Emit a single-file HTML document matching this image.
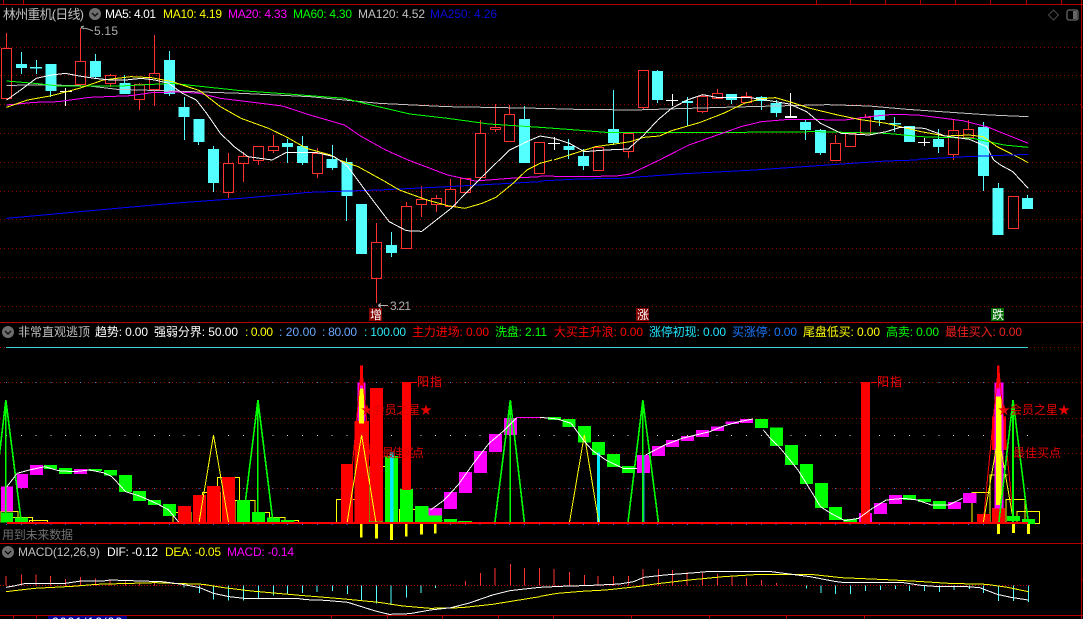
<!DOCTYPE html>
<html><head><meta charset="utf-8"><title>林州重机</title>
<style>
html,body{margin:0;padding:0;background:#000;width:1083px;height:619px;overflow:hidden}
svg{display:block;position:absolute;left:0;top:0;font-family:"Liberation Sans","Noto Sans CJK SC",sans-serif;shape-rendering:crispEdges}
.l{fill:none;vector-effect:non-scaling-stroke;stroke-width:1}
.t{fill:none;vector-effect:non-scaling-stroke;stroke-width:1.6}
.y{fill:none;vector-effect:non-scaling-stroke;stroke-width:1;stroke:#ff0}
.g{stroke:#00ff00}.w{stroke:#fff}.ye{stroke:#ff0}.m{stroke:#f0f}.gr{stroke:#c0c0c0}.b{stroke:#0000ff}
text{font-size:12px}
</style></head>
<body>
<svg width="1083" height="619" viewBox="0 0 1083 619">
<rect width="1083" height="619" fill="#000"/>

<!-- frame -->
<g stroke="#b40000" stroke-width="1" fill="none">
<path d="M0 4.5H1083M0 322.5H1083M0 543.5H1083M0 615.5H1083M1081.5 0V619"/>
<path d="M3.5 0V4M23.5 0V4M816.5 0V4M850.5 0V4M885.5 0V4M920.5 0V4M955.5 0V4M990.5 0V4M1026.5 0V4M1061.5 0V4"/>
<path d="M13.5 615V619M36.5 615V619M331.5 615V619M387.5 615V619M442.5 615V619M498.5 615V619M553.5 615V619M631.5 615V619M709.5 615V619M786.5 615V619M864.5 615V619"/>
<path d="M1081 107H1083M1081 212H1083M1081 322H1083M1081 436H1083M1081 580H1083"/>
</g>

<!-- main grid -->
<g stroke="#980000" stroke-width="1" stroke-dasharray="1 3" fill="none">
<path d="M0 47.5H1081M0 75.5H1081M0 104.5H1081M0 133.5H1081M0 162.5H1081M0 191.5H1081M0 219.5H1081M0 248.5H1081M0 277.5H1081M0 306.5H1081"/>
<path d="M0 382.5H1081M0 418.5H1081M0 453.5H1081M0 488.5H1081M0 347.5H6M1030 347.5H1081"/>
</g>
<path d="M0 585.5H1030" stroke="#c00000" stroke-width="1" stroke-dasharray="1 2" fill="none"/>
<path d="M6 347.5H1028" stroke="#3fd0d0" stroke-width="1"/>
<path d="M6 382.5H1028" stroke="#5a8ad0" stroke-width="1" stroke-dasharray="1 13.8" fill="none"/>
<path d="M6 488.5H1028" stroke="#4a80e0" stroke-width="1" stroke-dasharray="1 13.8" fill="none"/>
<path d="M6 435.5H1028" stroke="#e0e0e0" stroke-width="1" stroke-dasharray="1 13.8" fill="none"/>
<path d="M6 524.5H1028" stroke="#3060ff" stroke-width="1" stroke-dasharray="1 13.8" fill="none"/>

<!-- candles: cyan -->
<g fill="#54ffff">
<rect x="16" y="64" width="11" height="4"/><rect x="30" y="67" width="12" height="1.5"/><rect x="45.4" y="64" width="11" height="27"/>
<rect x="90" y="61" width="11" height="16"/><rect x="119.4" y="83" width="11" height="11"/><rect x="164" y="60" width="11" height="34"/>
<rect x="178.6" y="107" width="11" height="10"/><rect x="193.4" y="119" width="11" height="23"/><rect x="208" y="149" width="11" height="34"/>
<rect x="282" y="143" width="11" height="4"/><rect x="297" y="146" width="11" height="17"/><rect x="326.6" y="159" width="11" height="9"/>
<rect x="341.4" y="162" width="11" height="34"/><rect x="356" y="204" width="11" height="50"/><rect x="386" y="245" width="11" height="8"/>
<rect x="519" y="119" width="11" height="44"/><rect x="563.4" y="146" width="11" height="4"/><rect x="578" y="156" width="11" height="10"/>
<rect x="608" y="129" width="11" height="14"/><rect x="652" y="71" width="11" height="29"/><rect x="682" y="101" width="11" height="2"/>
<rect x="726" y="94" width="11" height="6"/><rect x="756" y="97" width="11" height="4"/><rect x="770.6" y="103" width="11" height="10"/>
<rect x="800" y="122" width="11" height="8"/><rect x="815" y="130" width="11" height="23"/><rect x="874" y="110" width="11" height="10"/>
<rect x="889" y="123" width="12" height="1.5"/><rect x="904" y="126" width="11" height="16"/><rect x="933" y="139" width="11" height="8"/>
<rect x="978" y="127" width="11" height="49"/><rect x="992.6" y="188" width="11" height="47"/><rect x="1022" y="198" width="11" height="11"/>
</g>
<path stroke="#54ffff" stroke-width="1" fill="none" d="M21.5 52V74M36.5 60V74M50.5 64V97M95.5 54V78M124.5 75V94M169.5 51V96M184.5 97V140M198.5 119V145M213.5 146V192M287.5 139V163M302.5 136V165M332.5 145V170M346.5 158V221M391.5 232V257M524.5 106V163M568.5 139V159M583.5 149V170M613.5 90V145M657.5 70V103M687.5 97V126M731.5 94V104M761.5 96V110M776.5 100V117M805.5 119V140M820.5 129V155M879.5 110V126M894.5 117V132M938.5 129V153M983.5 122V191M998.5 183V235M1027.5 195V209"/>
<!-- candles: white -->
<path stroke="#fff" stroke-width="1" fill="none" d="M60 91.5H72M65.5 88V106M548 143.5H560M554.5 137V150M666 100.5H678M672.5 94V106M785 117.5H797M790.5 93V117M918 142.5H930M924.5 138V146"/>
<path stroke="#fff" stroke-width="2" fill="none" d="M785 117H797"/>
<!-- candles: red -->
<g fill="none" stroke="#ff3232" stroke-width="1">
<rect x="1.5" y="48.5" width="10" height="50"/><rect x="75.5" y="61.5" width="10" height="23"/><rect x="105.5" y="75.5" width="10" height="8"/>
<rect x="134.5" y="84.5" width="10" height="15"/><rect x="149.5" y="73.5" width="10" height="16"/><rect x="223.5" y="163.5" width="10" height="29"/>
<rect x="238.5" y="156.5" width="10" height="7"/><rect x="253.5" y="146.5" width="10" height="14"/><rect x="268.5" y="146.5" width="10" height="4"/>
<rect x="312.5" y="153.5" width="10" height="20"/><rect x="371.5" y="242.5" width="10" height="36"/><rect x="401.5" y="206.5" width="10" height="42"/>
<rect x="416.5" y="199.5" width="10" height="5"/><rect x="431.5" y="198.5" width="10" height="6"/><rect x="445.5" y="189.5" width="10" height="17"/>
<rect x="460.5" y="178.5" width="10" height="14"/><rect x="475.5" y="133.5" width="10" height="44"/><rect x="490.5" y="127.5" width="10" height="2"/>
<rect x="504.5" y="114.5" width="10" height="27"/><rect x="534.5" y="142.5" width="10" height="31"/><rect x="593.5" y="147.5" width="10" height="23"/>
<rect x="623.5" y="133.5" width="10" height="18"/><rect x="638.5" y="70.5" width="10" height="37"/><rect x="697.5" y="96.5" width="10" height="15"/>
<rect x="712.5" y="93.5" width="10" height="5"/><rect x="741.5" y="96.5" width="10" height="6"/><rect x="830.5" y="143.5" width="10" height="17"/>
<rect x="845.5" y="133.5" width="10" height="13"/><rect x="860.5" y="117.5" width="10" height="16"/><rect x="948.5" y="130.5" width="10" height="24"/>
<rect x="963.5" y="129.5" width="10" height="8"/><rect x="1008.5" y="196.5" width="10" height="32"/>
<path d="M6.5 33V48M80.5 28V61M80.5 84V87M110.5 74V75M110.5 83V87M139.5 83V84M139.5 99V110M154.5 35V73M154.5 89V106M228.5 153V163M228.5 192V198M243.5 152V156M243.5 163V182M258.5 160V165M273.5 135V146M273.5 150V153M317.5 148V153M317.5 173V178M376.5 223V242M376.5 278V303M406.5 202V206M421.5 186V199M421.5 204V217M436.5 195V198M436.5 204V212M450.5 179V189M480.5 120V133M495.5 104V127M495.5 129V132M509.5 105V114M509.5 141V142M628.5 151V158M643.5 107V109M702.5 94V96M702.5 111V113M717.5 89V93M717.5 98V99M746.5 92V96M835.5 135V143M865.5 114V117M953.5 120V130M953.5 154V160M968.5 120V129"/>
</g>

<!-- MAs left top -->
<g transform="scale(.34436 .33333)">
<polyline class="l gr" points="19,256 150,255 260,258 340,268 500,273 700,280 900,290 1100,310 1300,320 1568,325"/>
<polyline class="l g" points="19,243 100,250 170,258 260,258 350,258 500,250 700,272 850,283 1000,295 1090,318 1190,342 1300,355 1420,372 1568,382"/>
<polyline class="l m" points="19,315 100,307 170,305 260,292 380,287 440,278 520,276 580,280 640,295 720,305 820,318 900,345 1000,375 1050,410 1120,450 1185,480"/>
<polyline class="l ye" points="19,322 80,300 150,287 230,265 300,240 380,230 440,233 500,245 580,272 640,320 700,355 780,385 830,410 890,445 960,465 985,480"/>
<polyline class="l w" points="19,300 60,270 105,235 150,225 190,220 230,228 275,235 320,240 365,240 410,235 450,240 490,250 530,280 570,300 600,340 640,400 680,440 720,470 790,480 830,458 920,458 970,470 985,480"/>
<polyline class="l w" points="1450,480 1480,450 1530,425 1568,408"/>
</g>
<g transform="translate(0 160) scale(.34436 .33333)">
<polyline class="l b" points="19,175 200,158 500,130 700,115 900,97 1100,90 1300,80 1568,65"/>
<polyline class="l m" points="1185,0 1300,45 1380,63 1480,55 1568,50"/>
<polyline class="l ye" points="985,0 1040,20 1110,60 1160,90 1240,120 1300,137 1350,145 1400,130 1440,112 1490,70 1530,30 1568,10"/>
<polyline class="l w" points="985,0 1010,20 1060,90 1130,185 1180,212 1225,214 1310,145 1400,50 1450,0"/>
</g>
<g transform="translate(540 0) scale(.3463 .33333)">
<polyline class="l gr" points="0,325 105,328 270,330 530,322 830,314 950,318 1060,328 1300,345 1410,350"/>
<polyline class="l g" points="0,382 80,388 190,397 570,397 800,395 1000,400 1100,410 1250,415 1340,435 1410,442"/>
<polyline class="l m" points="345,480 430,435 520,402 580,380 640,365 720,358 880,360 950,350 1020,343 1090,345 1220,362 1290,380 1350,405 1410,430"/>
<polyline class="l ye" points="40,480 100,460 160,440 230,430 260,425 300,412 345,408 380,392 460,368 530,340 590,310 640,296 680,293 720,305 780,325 860,345 920,358 1000,370 1060,385 1100,395 1170,408 1240,405 1280,410 1320,440 1400,482"/>
<polyline class="l w" points="0,408 40,415 85,430 128,455 190,450 255,447 300,405 340,360 380,325 425,300 470,284 510,292 600,292 640,298 680,305 720,312 770,335 810,370 870,400 950,405 1000,395 1040,382 1110,385 1170,408 1240,418 1290,440 1310,480"/>
<polyline class="l b" points="1090,478 1230,470 1410,463"/>
</g>
<g transform="translate(540 160) scale(.3463 .33333)">
<polyline class="l b" points="0,63 110,57 230,55 400,42 620,30 830,15 1000,3 1090,0"/>
<polyline class="l m" points="0,48 105,50 220,48 260,42 345,0"/>
<polyline class="l ye" points="0,10 35,0"/>
<polyline class="l ye" points="1395,0 1410,8"/>
<polyline class="l w" points="1310,0 1330,15 1365,35 1410,85"/>
</g>

<!-- panel 2 : bars -->
<g transform="translate(0 430) scale(.34436 .33333)">
<path class="y" d="M3 278V244H52V278M20 278V262H95V278M85 278V271H138V278M503 278V247H555V278M588 278V187H640V278M631 278V142H696V278M683 278V211H740V278M740 278V247H783V278M783 278V262H827V278M827 278V271H867V278M977 278V208H1033V278M1075 278V110H1118M1160 278V238H1205M1245 278V272H1285"/>
<g fill="#f0f">
<rect x="3" y="170" width="35" height="75"/><rect x="50" y="132" width="32" height="42"/><rect x="87" y="105" width="38" height="30"/><rect x="215" y="117" width="38" height="15"/>
<rect x="1245" y="234" width="38" height="22"/><rect x="1289" y="186" width="38" height="51"/><rect x="1333" y="126" width="38" height="63"/><rect x="1376" y="63" width="38" height="66"/><rect x="1420" y="12" width="38" height="54"/><rect x="1463" y="-36" width="38" height="51"/>
</g>
<g fill="#00ff00">
<rect x="3" y="248" width="35" height="30"/><rect x="44" y="263" width="38" height="15"/><rect x="128" y="105" width="38" height="12"/><rect x="171" y="114" width="38" height="18"/><rect x="258" y="117" width="38" height="6"/><rect x="302" y="120" width="38" height="17"/><rect x="346" y="135" width="37" height="51"/><rect x="386" y="183" width="38" height="30"/><rect x="430" y="210" width="37" height="15"/><rect x="473" y="222" width="38" height="36"/>
<rect x="688" y="210" width="38" height="68"/><rect x="732" y="246" width="37" height="32"/><rect x="775" y="262" width="38" height="16"/><rect x="816" y="270" width="39" height="8"/>
<rect x="1118" y="78" width="38" height="200"/><rect x="1161" y="177" width="38" height="101"/><rect x="1205" y="228" width="39" height="50"/><rect x="1245" y="256" width="38" height="22"/><rect x="1289" y="267" width="38" height="11"/><rect x="1330" y="273" width="40" height="5"/>
<rect x="1072" y="270" width="40" height="12"/>
</g>
<g fill="#f00">
<rect x="517" y="228" width="38" height="50"/><rect x="560" y="195" width="38" height="83"/><rect x="601" y="168" width="39" height="110"/><rect x="645" y="141" width="37" height="137"/>
<rect x="990" y="102" width="35" height="176"/><rect x="1030" y="-27" width="42" height="305"/><rect x="1074" y="-126" width="38" height="400"/><rect x="1167" y="-144" width="26" height="324"/>
</g>
<rect x="1038" y="-143" width="24" height="116" fill="#f0f"/>
<rect x="1043" y="-125" width="14" height="105" fill="#ff0"/>
<rect x="1046" y="-194" width="8" height="60" fill="#f00"/>
<rect x="1132" y="68" width="10" height="210" fill="#00e8ff"/>
<polyline class="l" style="stroke:#f00" points="1008,278 1050,-194 1092,278"/>
<polyline class="y" points="578,278 620,15 664,278"/>
<polyline class="y" points="1008,278 1050,15 1092,278"/>
<polyline class="t g" points="-25,278 17,-90 62,278"/><path class="t g" d="M17 -90V278"/>
<polyline class="t g" points="705,278 749,-90 793,278"/><path class="t g" d="M749 -90V278"/>
<polyline class="t g" points="1437,278 1482,-90 1523,278"/><path class="t g" d="M1482 -90V278"/>
<polyline class="l w" points="20,170 50,130 85,120 130,110 170,122 215,125 260,120 300,128 325,140 365,185 405,198 450,218 490,240 520,278"/>
<polyline class="l w" points="1250,240 1290,210 1330,165 1375,100 1420,40 1460,5 1500,-36"/>
<polyline class="l" style="stroke:#f0f" points="1500,-37 1568,-37"/>
<g fill="#ff0"><rect x="1045" y="282" width="8" height="41"/><rect x="1089" y="282" width="8" height="44"/><rect x="1132" y="282" width="9" height="48"/><rect x="1176" y="282" width="8" height="38"/><rect x="1220" y="282" width="8" height="32"/><rect x="1261" y="282" width="7" height="29"/></g>
</g>
<g transform="translate(540 430) scale(.3463 .33333)">
<path class="y" d="M1248 278V187H1300M1300 278V135H1350M1345 278V208H1400V278M1378 278V244H1443V281H1378"/>
<g fill="#f0f">
<rect x="280" y="75" width="38" height="54"/><rect x="323" y="48" width="38" height="30"/><rect x="364" y="30" width="37" height="21"/><rect x="407" y="18" width="38" height="15"/><rect x="450" y="0" width="38" height="21"/><rect x="494" y="-10" width="37" height="13"/><rect x="536" y="-25" width="39" height="7"/><rect x="578" y="-33" width="37" height="12"/>
<rect x="921" y="249" width="38" height="29"/><rect x="964" y="219" width="38" height="33"/><rect x="1008" y="195" width="37" height="27"/><rect x="1178" y="216" width="38" height="21"/><rect x="1221" y="189" width="39" height="30"/>
</g>
<g fill="#00ff00">
<rect x="23" y="-39" width="38" height="9"/>
<rect x="65" y="-33" width="38" height="24"/><rect x="110" y="-12" width="37" height="50"/><rect x="150" y="36" width="38" height="39"/><rect x="193" y="72" width="38" height="39"/><rect x="237" y="108" width="38" height="21"/>
<rect x="621" y="-33" width="37" height="27"/><rect x="664" y="-8" width="38" height="56"/><rect x="707" y="45" width="38" height="60"/><rect x="751" y="102" width="37" height="60"/><rect x="794" y="159" width="38" height="75"/><rect x="835" y="231" width="37" height="39"/><rect x="877" y="267" width="38" height="11"/>
<rect x="1048" y="195" width="38" height="15"/><rect x="1092" y="207" width="37" height="9"/><rect x="1135" y="213" width="37" height="24"/>
<rect x="1349" y="258" width="37" height="15"/><rect x="1392" y="267" width="37" height="15"/>
</g>
<rect x="927" y="-144" width="26" height="422" fill="#f00"/>
<rect x="1262" y="252" width="38" height="26" fill="#f00"/><rect x="1305" y="234" width="38" height="44" fill="#f00"/>
<rect x="1305" y="-40" width="40" height="100" fill="#f00"/>
<rect x="1312" y="-143" width="26" height="378" fill="#f0f"/>
<rect x="1317" y="-100" width="15" height="325" fill="#ff0"/>
<rect x="1320" y="-194" width="7" height="70" fill="#f00"/>
<rect x="165" y="68" width="8" height="210" fill="#00e8ff"/>
<rect x="295" y="75" width="7" height="203" fill="#1ea0e0"/>
<polyline class="l" style="stroke:#f00" points="1280,278 1324,-194 1368,278"/>
<polyline class="y" points="85,278 128,15 170,278"/>
<polyline class="y" points="1280,278 1324,15 1368,278"/>
<polyline class="t g" points="254,278 297,-90 342,278"/><path class="t g" d="M297 -90V278"/>
<polyline class="t g" points="1325,278 1366,-90 1410,278"/><path class="t g" d="M1366 -90V278"/>
<polyline class="l w" points="0,-38 50,-33 90,-20 125,30 150,60 190,90 240,115 280,115"/>
<polyline class="l w" points="305,75 360,45 410,25 450,15 490,5 530,-12 575,-25 615,-33"/>
<polyline class="l w" points="645,0 665,25 690,50 710,75 745,120 775,170 810,230 840,250 880,272 920,265 960,235 1000,210 1050,205 1090,210 1130,225 1180,225 1220,205"/>
<g fill="#ff0"><rect x="1320" y="282" width="8" height="30"/><rect x="1363" y="282" width="8" height="27"/><rect x="1406" y="282" width="9" height="30"/></g>
</g>
<rect x="7" y="522" width="1021" height="2" fill="#f00"/>
<path d="M403 382.5H417M871 382.5H877" stroke="#f00" stroke-width="1"/>

<!-- MACD -->
<g transform="translate(0 525) scale(.34436 .33333)">
<path stroke="#ff3232" stroke-width="1" fill="none" style="vector-effect:non-scaling-stroke" d="M18 181V153M62 181V148M105 181V148M147 181V153M190 181V162M234 181V156M277 181V160M320 181V163M364 181V170M405 181V174M449 181V172M1308 181V179M1352 181V168M1395 181V144M1438 181V129M1482 181V117M1523 181V129M1566 181V129"/>
<path stroke="#54ffff" stroke-width="1" fill="none" style="vector-effect:non-scaling-stroke" d="M535 181V188M579 181V204M620 181V224M663 181V227M707 181V227M750 181V220M794 181V212M835 181V208M878 181V204M921 181V201M965 181V198M1009 181V207M1050 181V226M1093 181V235M1136 181V240M1180 181V218M1223 181V204M1264 181V189"/>
<polyline class="l ye" points="17,200 100,190 210,184 280,178 450,173 590,178 650,188 730,198 860,210 1000,222 1100,232 1170,243 1250,250 1340,248 1430,238 1568,215"/>
<polyline class="l w" points="17,187 40,183 75,175 125,175 190,175 235,168 300,168 320,165 470,170 530,178 580,188 620,205 665,215 710,220 860,220 890,224 945,226 1010,232 1050,245 1090,258 1130,268 1190,266 1250,255 1310,248 1360,235 1430,210 1480,197 1568,187"/>
</g>
<g transform="translate(540 525) scale(.3463 .33333)">
<path stroke="#ff3232" stroke-width="1" fill="none" style="vector-effect:non-scaling-stroke" d="M41 181V132M85 181V141M128 181V150M168 181V153M212 181V153M255 181V153M298 181V132M342 181V132M382 181V135M425 181V141M469 181V144M512 181V147M555 181V153M597 181V159M639 181V165M683 181V174"/>
<path stroke="#54ffff" stroke-width="1" fill="none" style="vector-effect:non-scaling-stroke" d="M769 181V190M812 181V204M853 181V207M896 181V207M940 181V198M983 181V195M1026 181V192M1067 181V198M1110 181V198M1153 181V201M1196 181V195M1240 181V192M1280 181V204M1324 181V228M1367 181V228M1410 181V231"/>
<polyline class="l ye" points="0,214 50,205 120,199 190,195 280,185 340,176 430,165 530,155 620,149 790,149 870,158 1000,164 1090,169 1180,175 1290,178 1350,187 1410,200"/>
<polyline class="l w" points="0,187 60,184 150,181 230,177 270,170 300,157 360,150 450,143 490,139 660,139 720,147 780,155 850,169 880,173 1050,173 1100,181 1140,184 1220,184 1270,188 1320,208 1360,217 1410,225"/>
</g>

<!-- header row 1 -->
<text x="3" y="19" style="font-size:13px" fill="#c0c0c0" textLength="81">林州重机(日线)</text>
<circle cx="95" cy="14" r="6" fill="#6e6e6e" style="shape-rendering:auto"/>
<path d="M92 13l3 3 3-3" stroke="#111" stroke-width="1.5" fill="none" style="shape-rendering:auto"/>
<text x="105" y="18" fill="#fff" textLength="51">MA5: 4.01</text>
<text x="163" y="18" fill="#ff0" textLength="59">MA10: 4.19</text>
<text x="228" y="18" fill="#f0f" textLength="59">MA20: 4.33</text>
<text x="293" y="18" fill="#0f0" textLength="59">MA60: 4.30</text>
<text x="358" y="18" fill="#c0c0c0" textLength="67">MA120: 4.52</text>
<text x="430" y="18" fill="#0a0ad8" textLength="67">MA250: 4.26</text>

<!-- top-right icons -->
<g style="shape-rendering:auto" fill="none" stroke="#4a4a4a" stroke-width="1">
<path d="M1053.5 10l5 5-5 5-5-5z"/>
<rect x="1067" y="10" width="11" height="10" rx="2" stroke="#666" stroke-width="1.3"/>
<rect x="1073" y="11" width="4" height="8" fill="#666" stroke="none"/>
</g>

<!-- hi/lo labels -->
<path d="M81 27l3-1M81 27l3 2M81 28q6 0 12 3" stroke="#b0b0b0" stroke-width="1" fill="none" style="shape-rendering:auto"/>
<text x="94" y="35" fill="#b0b0b0" textLength="24">5.15</text>
<path d="M378 305.5H388M378 305.5l3-2M378 305.5l3 2" stroke="#b0b0b0" stroke-width="1" fill="none"/>
<text x="390" y="310" fill="#b0b0b0" textLength="21">3.21</text>

<!-- pills -->
<rect x="369" y="308" width="13" height="13" fill="#800000"/><text x="370" y="319" fill="#fff" textLength="12">增</text>
<rect x="636" y="308" width="13" height="13" fill="#800000"/><text x="637" y="319" fill="#fff" textLength="12">涨</text>
<rect x="991" y="308" width="13" height="13" fill="#006a00"/><text x="992" y="319" fill="#fff" textLength="12">跌</text>

<!-- panel 2 header -->
<circle cx="8" cy="332" r="6" fill="#6e6e6e" style="shape-rendering:auto"/>
<path d="M5 331l3 3 3-3" stroke="#111" stroke-width="1.5" fill="none" style="shape-rendering:auto"/>
<text x="18" y="336" fill="#c0c0c0" textLength="72">非常直观逃顶</text>
<text x="95" y="336" fill="#fff" textLength="53">趋势: 0.00</text>
<text x="154" y="336" fill="#fff" textLength="84">强弱分界: 50.00</text>
<text x="245" y="336" fill="#ff0" textLength="28">: 0.00</text>
<text x="279" y="336" fill="#6aa8ff" textLength="37">: 20.00</text>
<text x="322" y="336" fill="#6aa8ff" textLength="35">: 80.00</text>
<text x="364" y="336" fill="#2ae8f0" textLength="42">: 100.00</text>
<text x="412" y="336" fill="#f00" textLength="77">主力进场: 0.00</text>
<text x="495" y="336" fill="#00ff00" textLength="52">洗盘: 2.11</text>
<text x="554" y="336" fill="#f00" textLength="89">大买主升浪: 0.00</text>
<text x="649" y="336" fill="#1fe8ff" textLength="77">涨停初现: 0.00</text>
<text x="732" y="336" fill="#1a78ff" textLength="65">买涨停: 0.00</text>
<text x="803" y="336" fill="#ff0" textLength="77">尾盘低买: 0.00</text>
<text x="886" y="336" fill="#00ff00" textLength="53">高卖: 0.00</text>
<text x="945" y="336" fill="#f02020" textLength="77">最佳买入: 0.00</text>

<!-- panel 2 labels -->
<text x="417" y="386" fill="#f00" textLength="25">阳指</text>
<text x="877" y="386" fill="#f00" textLength="25">阳指</text>
<text x="361" y="414" fill="#e80000" textLength="71">★会员之星★</text>
<text x="998" y="414" fill="#e80000" textLength="72">★会员之星★</text>
<text x="382" y="457" fill="#e00000" textLength="42">最佳买点</text>
<text x="1013" y="457" fill="#e00000" textLength="48">最佳买点</text>
<text x="2" y="539" fill="#707070" textLength="71">用到未来数据</text>

<!-- MACD header -->
<circle cx="8" cy="552" r="6" fill="#6e6e6e" style="shape-rendering:auto"/>
<path d="M5 551l3 3 3-3" stroke="#111" stroke-width="1.5" fill="none" style="shape-rendering:auto"/>
<text x="18" y="556" fill="#c0c0c0" textLength="82">MACD(12,26,9)</text>
<text x="107" y="556" fill="#fff" textLength="51">DIF: -0.12</text>
<text x="165" y="556" fill="#ff0" textLength="56">DEA: -0.05</text>
<text x="227" y="556" fill="#f0f" textLength="67">MACD: -0.14</text>

<!-- bottom date tag -->
<rect x="48" y="616" width="79" height="3" fill="#000090"/>
<text x="52" y="626" fill="#fff" textLength="70">2021/12/22</text>
</svg>
</body></html>
